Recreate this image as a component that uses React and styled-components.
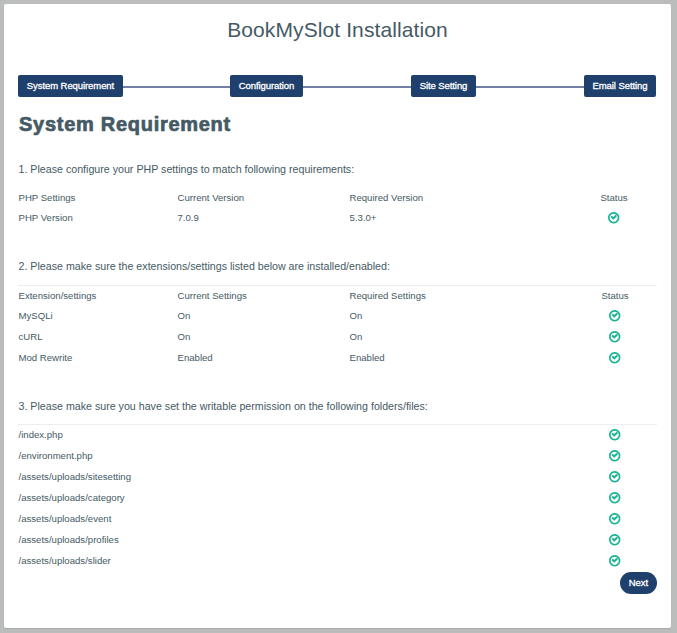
import React from "react";
import styled, { createGlobalStyle } from "styled-components";

const Global = createGlobalStyle`
  * { box-sizing: border-box; }
  body {
    margin: 0;
    background: #bbbdbc;
    color: #455a64;
    font-family: "Liberation Sans", Arial, sans-serif;
    font-size: 9.6px;
  }
`;

const Card = styled.main`
  width: 667px;
  height: 624px;
  margin: 4px;
  padding: 14px 14px 0 14px;
  display: flex;
  flex-direction: column;
  background: #fff;
  border-radius: 2px;
  box-shadow: 0 1px 1px rgba(0, 0, 0, 0.1);
`;

const Title = styled.h1`
  margin: 0;
  height: 57px;
  font-size: 21px;
  line-height: 24px;
  font-weight: 400;
  letter-spacing: 0.1px;
  text-align: center;
  white-space: nowrap;
`;

const Stepper = styled.nav`
  display: flex;
  align-items: center;
  height: 22px;
`;

const Step = styled.button`
  width: ${(p) => p.$width}px;
  height: 22px;
  padding: 0;
  border: 0;
  border-radius: 2px;
  background: #1f406c;
  color: #fff;
  font: 9.5px/22px "Liberation Sans", Arial, sans-serif;
  letter-spacing: -0.08px;
  -webkit-text-stroke: 0.3px #fff;
  white-space: nowrap;
`;

const Connector = styled.span`
  width: ${(p) => p.$width}px;
  height: 2px;
  margin-top: 2px;
  background: #747fa8;
`;

const Heading = styled.h2`
  margin: 15px 0 0;
  padding-left: 1px;
  height: 24px;
  font-size: 20px;
  line-height: 24px;
  font-weight: 700;
  letter-spacing: 0.72px;
  -webkit-text-stroke: 0.7px #455a64;
  white-space: nowrap;
`;

const Section = styled.section`
  margin-top: ${(p) => p.$gap}px;
`;

const Prompt = styled.p`
  margin: 0;
  padding-left: 0.5px;
  height: 20px;
  font-size: 10.66px;
  line-height: 20px;
  white-space: nowrap;
`;

const Table = styled.div`
  margin-top: ${(p) => p.$gap || 8}px;
  border-top: 1px solid ${(p) => (p.$ruled ? "#eceff0" : "transparent")};
`;

const Row = styled.div`
  display: grid;
  grid-template-columns: 159px 172px 1fr ${(p) => p.$status}px;
  height: ${(p) => p.$height || 21}px;
  padding-left: 0.5px;
  line-height: 20px;
  white-space: nowrap;
`;

const Status = styled.span`
  display: flex;
  justify-content: center;
  align-items: center;
  height: 20px;
  grid-column: 4;
`;

const Footer = styled.footer`
  display: flex;
  justify-content: flex-end;
`;

const Next = styled(Step)`
  border-radius: 11px;
  letter-spacing: 0;
`;

const CheckIcon = () => (
  <svg width="11.4" height="11.4" viewBox="0 128 1536 1536" fill="#1ab394">
    <path d="M1171 723l-422 422q-19 19-45 19t-45-19l-294-294q-19-19-19-45t19-45l102-102q19-19 45-19t45 19l147 147 275-275q19-19 45-19t45 19l102 102q19 19 19 45t-19 45zm141 173q0-148-73-273t-198-198-273-73-273 73-198 198-73 273 73 273 198 198 273 73 273-73 198-198 73-273zm224 0q0 209-103 385.5t-279.5 279.5-385.5 103-385.5-103-279.5-279.5-103-385.5 103-385.5 279.5-279.5 385.5-103 385.5 103 279.5 279.5 103 385.5z" />
  </svg>
);

const Line = ({ cells, status, height }) => (
  <Row $status={status} $height={height}>
    {cells.map((c, i) => (
      <span key={i}>{c}</span>
    ))}
    <Status>
      <CheckIcon />
    </Status>
  </Row>
);

const Head = ({ cells, status, height }) => (
  <Row $status={status} $height={height}>
    {cells.map((c) => (
      <span key={c}>{c}</span>
    ))}
    <Status>Status</Status>
  </Row>
);

const folders = [
  "/index.php",
  "/environment.php",
  "/assets/uploads/sitesetting",
  "/assets/uploads/category",
  "/assets/uploads/event",
  "/assets/uploads/profiles",
  "/assets/uploads/slider",
];

export default function App() {
  return (
    <>
      <Global />
      <Card>
        <Title>BookMySlot Installation</Title>
        <Stepper>
          <Step $width={105}>System Requirement</Step>
          <Connector $width={107} />
          <Step $width={73}>Configuration</Step>
          <Connector $width={108} />
          <Step $width={65}>Site Setting</Step>
          <Connector $width={108} />
          <Step $width={72}>Email Setting</Step>
        </Stepper>
        <Heading>System Requirement</Heading>

        <Section $gap={23}>
          <Prompt>1. Please configure your PHP settings to match following requirements:</Prompt>
          <Table>
            <Head cells={["PHP Settings", "Current Version", "Required Version"]} status={86} height={20} />
            <Line cells={["PHP Version", "7.0.9", "5.3.0+"]} status={86} height={20} />
          </Table>
        </Section>

        <Section $gap={28}>
          <Prompt>2. Please make sure the extensions/settings listed below are installed/enabled:</Prompt>
          <Table $ruled $gap={9}>
            <Head cells={["Extension/settings", "Current Settings", "Required Settings"]} status={84} height={20} />
            <Line cells={["MySQLi", "On", "On"]} status={84} />
            <Line cells={["cURL", "On", "On"]} status={84} />
            <Line cells={["Mod Rewrite", "Enabled", "Enabled"]} status={84} />
          </Table>
        </Section>

        <Section $gap={27}>
          <Prompt>3. Please make sure you have set the writable permission on the following folders/files:</Prompt>
          <Table $ruled $gap={8}>
            {folders.map((f) => (
              <Line key={f} cells={[f]} status={84} />
            ))}
          </Table>
        </Section>

        <Footer>
          <Next $width={37}>Next</Next>
        </Footer>
      </Card>
    </>
  );
}
